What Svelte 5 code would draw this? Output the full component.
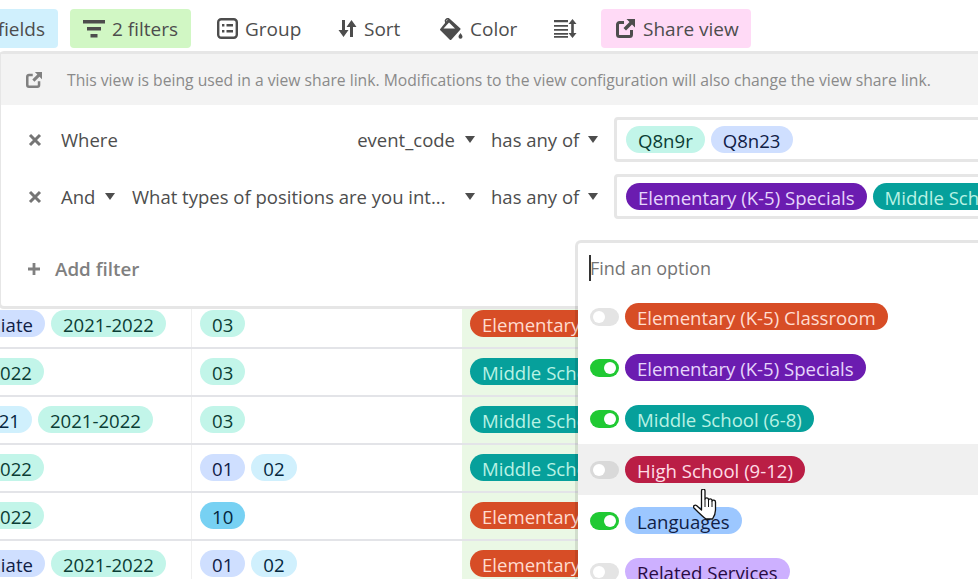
<script>
	const rows = [
		{ pad: 25, years: [['Affiliate', 'indigo'], ['2021-2022', 'mint']], codes: [['03', 'mint']], grade: 'el' },
		{ pad: 25, years: [['Affiliate', 'indigo'], ['2021-2022', 'mint']], codes: [['03', 'mint']], grade: 'el' },
		{ pad: 147, years: [['2021-2022', 'mint']], codes: [['03', 'mint']], grade: 'ms' },
		{ pad: 38, years: [['2020-2021', 'sky'], ['2021-2022', 'mint']], codes: [['01', 'indigo']], grade: 'ms' },
		{ pad: 147, years: [['2021-2022', 'mint']], codes: [['03', 'mint']], grade: 'el' },
		{ pad: 25, years: [['Affiliate', 'indigo'], ['2021-2022', 'mint']], codes: [['03', 'mint']], grade: 'el' },
		{ pad: 147, years: [['2021-2022', 'mint']], codes: [['03', 'mint']], grade: 'ms' },
		{ pad: 38, years: [['2020-2021', 'sky'], ['2021-2022', 'mint']], codes: [['03', 'mint']], grade: 'ms' },
		{ pad: 147, years: [['2021-2022', 'mint']], codes: [['01', 'indigo'], ['02', 'sky']], grade: 'ms' },
		{ pad: 147, years: [['2021-2022', 'mint']], codes: [['10', 'blue']], grade: 'el' },
		{ pad: 25, years: [['Affiliate', 'indigo'], ['2021-2022', 'mint']], codes: [['01', 'indigo'], ['02', 'sky']], grade: 'el' }
	];

	const options = [
		{ label: 'Elementary (K-5) Classroom', color: 'orange', on: false },
		{ label: 'Elementary (K-5) Specials', color: 'purple', on: true },
		{ label: 'Middle School (6-8)', color: 'teal', on: true },
		{ label: 'High School (9-12)', color: 'crimson', on: false, hover: true },
		{ label: 'Languages', color: 'lightblue', on: true },
		{ label: 'Related Services', color: 'lilac', on: false }
	];
</script>

<div class="page">
	<div class="toolbar">
		<button class="tool hide">Hide fields</button>
		<button class="tool filters">
			<svg width="22" height="18" viewBox="0 0 22 18"><path d="M0 0h22v3.4H0zM4 7h14v3.4H4zM7.500 14h7v3.400h-7z" fill="#4d4d4d" /></svg>
			2 filters
		</button>
		<button class="tool">
			<svg width="21" height="21" viewBox="0 0 21 21"><rect x="1.200" y="1.200" width="18.600" height="18.600" rx="3" fill="none" stroke="#4d4d4d" stroke-width="2.400" /><path d="M5 6h2.400v2.400H5zM5 12h2.400v2.400H5zM9.500 6H16v2.400H9.500zM9.500 12H16v2.400H9.500z" fill="#4d4d4d" /></svg>
			Group
		</button>
		<button class="tool">
			<svg width="19" height="19" viewBox="0 0 19 19"><path d="M4 1h3v10h3.500L5.500 18 .5 11H4zM12 18h3V8h3.500l-5-7-5 7H12z" fill="#4d4d4d" /></svg>
			Sort
		</button>
		<button class="tool">
			<svg width="23" height="22" viewBox="0 0 23 22"><path d="M9 1.500L19.500 11 10.500 21 1 11.500z" fill="#4d4d4d" stroke="#4d4d4d" stroke-width="2" stroke-linejoin="round" /><path d="M9 4.500L15 10.500H3.500z" fill="#fff" /><path d="M6 5.500L5.500 2.500Q6.500 0 9 1" fill="none" stroke="#4d4d4d" stroke-width="1.600" /><path d="M20.500 15c1.200 1.700 2 2.700 2 3.800a2 2 0 0 1-4 0c0-1.100.8-2.100 2-3.800z" fill="#4d4d4d" /></svg>
			Color
		</button>
		<button class="tool">
			<svg width="23" height="19" viewBox="0 0 23 19"><path d="M0 1h14v2.200H0zM0 6h14v1.800H0zM0 10h14v1.800H0zM0 14h14v1.800H0zM0 17h14v1.800H0z" fill="#4d4d4d" /><path d="M18.500 0l4 5h-2.700v9h2.700l-4 5-4-5h2.700V5h-2.700z" fill="#4d4d4d" /></svg>
		</button>
		<button class="tool share">
			<svg width="19" height="19" viewBox="0 0 19 19"><path d="M8 3.500H3.500A2 2 0 0 0 1.500 5.500v10a2 2 0 0 0 2 2h10a2 2 0 0 0 2-2V11" fill="none" stroke="#4d4d4d" stroke-width="3" /><path d="M10.500 0H19v8.500l-3-3-6 6-2.500-2.500 6-6z" fill="#4d4d4d" /></svg>
			Share view
		</button>
	</div>

	<div class="table">
		{#each rows as row}
			<div class="row">
				<div class="cell years" style="padding-right: {row.pad}px">
					{#each row.years as [text, tone]}
						<span class="pill {tone}">{text}</span>
					{/each}
				</div>
				<div class="cell codes">
					{#each row.codes as [text, tone]}
						<span class="pill {tone}">{text}</span>
					{/each}
				</div>
				<div class="cell grade">
					{#if row.grade === 'el'}
						<span class="pill orange">Elementary (K-5) Classroom</span>
					{:else}
						<span class="pill teal">Middle School (6-8)</span>
					{/if}
				</div>
			</div>
		{/each}
	</div>

	<div class="panel">
		<div class="notice">
			<svg width="16" height="16" viewBox="0 0 19 19"><path d="M8 3.500H3.500A2 2 0 0 0 1.500 5.500v10a2 2 0 0 0 2 2h10a2 2 0 0 0 2-2V11" fill="none" stroke="#808080" stroke-width="3" /><path d="M10.500 0H19v8.500l-3-3-6 6-2.500-2.500 6-6z" fill="#808080" /></svg>
			<span>This view is being used in a view share link. Modifications to the view configuration will also change the view share link.</span>
		</div>

		<div class="filter first">
			<svg class="x" width="14" height="14" viewBox="0 0 14 14"><path d="M2 2l10 10M12 2L2 12" stroke="#757575" stroke-width="3" /></svg>
			<span class="conj">Where</span>
			<span class="field end">event_code<i class="caret"></i></span>
			<span class="op">has any of<i class="caret"></i></span>
			<div class="values">
				<span class="pill mint">Q8n9r</span>
				<span class="pill indigo">Q8n23</span>
			</div>
		</div>

		<div class="filter">
			<svg class="x" width="14" height="14" viewBox="0 0 14 14"><path d="M2 2l10 10M12 2L2 12" stroke="#757575" stroke-width="3" /></svg>
			<span class="conj">And<i class="caret"></i></span>
			<span class="field">What types of positions are you int...<i class="caret"></i></span>
			<span class="op">has any of<i class="caret"></i></span>
			<div class="values">
				<span class="pill purple">Elementary (K-5) Specials</span>
				<span class="pill teal">Middle School (6-8)</span>
			</div>
		</div>

		<div class="add">
			<svg width="12" height="12" viewBox="0 0 12 12"><path d="M4.600 0h2.800v4.600H12v2.800H7.400V12H4.600V7.400H0V4.600h4.600z" fill="#808080" /></svg>
			Add filter
		</div>
	</div>

	<div class="menu">
		<div class="search"><i class="text-cursor"></i>Find an option</div>
		{#each options as opt}
			<div class="option" class:hover={opt.hover}>
				<span class="toggle" class:on={opt.on}><i></i></span>
				<span class="pill {opt.color}">{opt.label}</span>
			</div>
		{/each}
	</div>

	<svg class="hand" width="26" height="32" viewBox="0 0 26 32">
		<path d="M8.500 2c0-2.500 3.500-2.500 3.500 0V10c.5-1.500 3-1.500 3.500 0v1c.5-1.500 3-1.500 3.500 0v1c.5-1.500 3.500-1 3.500 1v8c0 4-1 6-3 9H13C10 28 5 23 1 19c-1.500-2 1-3.500 2.500-2.500L8.500 21z" fill="#fff" stroke="#111" stroke-width="1.300" stroke-linejoin="round" />
		<path d="M12 10v8M15.500 11v7M19 12v6" stroke="#111" stroke-width="1" />
	</svg>
</div>

<style>
	:global(body) {
		margin: 0;
	}

	.page {
		position: relative;
		width: 978px;
		height: 579px;
		overflow: hidden;
		background: #fff;
		font-family: "Open Sans", "Noto Sans", sans-serif;
		font-size: 17px;
		color: #4d4d4d;
	}

	.toolbar {
		display: grid;
		grid-template-columns: 132px 134px 121px 102px 114px 60px 160px;
		height: 39px;
		padding-top: 9px;
		margin-left: -62px;
		white-space: nowrap;
	}

	.tool {
		display: flex;
		align-items: center;
		justify-self: start;
		gap: 7px;
		height: 39px;
		padding: 0 13px;
		border: 0;
		border-radius: 4px;
		background: none;
		font: inherit;
		font-size: 19px;
		color: #4d4d4d;
	}

	.hide {
		justify-self: end;
		margin-right: 12px;
		background: #d0f0fd;
	}

	.filters {
		background: #d1f7c4;
	}

	.share {
		gap: 8px;
		padding: 0 12px 0 15px;
		background: #ffdaf6;
	}

	.table {
		position: absolute;
		top: 61px;
		left: 0;
		width: 978px;
	}

	.row {
		display: grid;
		grid-template-columns: 192px 270px 516px;
		height: 48px;
		box-sizing: border-box;
		border-bottom: 2px solid #e3e4e8;
	}

	.cell {
		display: flex;
		gap: 6px;
		padding-top: 9px;
		box-sizing: border-box;
		overflow: hidden;
		white-space: nowrap;
	}

	.years {
		justify-content: flex-end;
		border-right: 1px solid #efefef;
	}

	.codes {
		padding-left: 8px;
	}

	.grade {
		padding-left: 8px;
		background: #eaf8e5;
	}

	.pill {
		display: inline-block;
		flex: none;
		height: 27px;
		padding: 0 12px;
		border-radius: 14px;
		font-size: 18.600px;
		line-height: 29px;
		white-space: nowrap;
	}

	.mint {
		background: #c2f5e9;
		color: #0b3d35;
	}

	.indigo {
		background: #cfdfff;
		color: #102046;
	}

	.sky {
		background: #d0f0fd;
		color: #04283f;
	}

	.blue {
		background: #77d1f3;
		color: #04283f;
	}

	.orange {
		background: #d74d26;
		color: #ffdcd0;
	}

	.teal {
		background: #06a09b;
		color: #b8f2e4;
	}

	.purple {
		background: #6b1cb0;
		color: #e6d5fb;
	}

	.crimson {
		background: #ba1e45;
		color: #ffdce5;
	}

	.lightblue {
		background: #9cc7ff;
		color: #102046;
	}

	.lilac {
		background: #cdb0ff;
		color: #280b42;
	}

	.panel {
		position: absolute;
		top: 51px;
		left: -2px;
		width: 1100px;
		height: 258px;
		box-sizing: border-box;
		border: 3px solid #e6e6e6;
		border-radius: 6px;
		background: #fff;
	}

	.notice {
		display: flex;
		align-items: center;
		gap: 25px;
		height: 51px;
		padding-left: 25px;
		background: #f3f3f3;
		font-size: 15.700px;
		color: #8a8a8a;
		white-space: nowrap;
	}

	.filter {
		display: grid;
		grid-template-columns: 33px 71px 359px 123px auto;
		align-items: center;
		height: 57px;
		padding-left: 27px;
		white-space: nowrap;
	}

	.filter.first {
		margin-top: 6px;
	}

	.x {
		display: block;
	}

	.conj,
	.field,
	.op {
		display: flex;
		align-items: center;
		font-size: 18.500px;
	}

	.conj i {
		margin-left: 10px;
	}

	.field {
		justify-content: space-between;
		padding-right: 16px;
	}

	.field.end {
		justify-content: flex-end;
	}

	.field.end i {
		margin-left: 10px;
	}

	.op i {
		margin-left: 9px;
	}

	.caret {
		display: inline-block;
		width: 0;
		height: 0;
		border-left: 5.500px solid transparent;
		border-right: 5.500px solid transparent;
		border-top: 7px solid #4d4d4d;
	}

	.values {
		display: flex;
		gap: 6px;
		box-sizing: border-box;
		width: 400px;
		height: 45px;
		padding: 6px 9px;
		border: 3px solid #e6e6e6;
		border-radius: 4px;
		overflow: hidden;
	}

	.add {
		display: flex;
		align-items: center;
		gap: 15px;
		margin-top: 22px;
		padding-left: 27px;
		height: 44px;
		font-size: 18.800px;
		font-weight: 600;
		color: #808080;
	}

	.menu {
		position: absolute;
		top: 240px;
		left: 575px;
		width: 420px;
		height: 360px;
		box-sizing: border-box;
		border: 3px solid rgba(0, 0, 0, 0.1);
		border-radius: 6px;
		background: #fff;
		background-clip: padding-box;
	}

	.search {
		position: relative;
		height: 48px;
		padding-left: 12px;
		font-size: 18px;
		line-height: 50px;
		color: #757575;
	}

	.text-cursor {
		position: absolute;
		left: 11px;
		top: 12px;
		width: 2px;
		height: 26px;
		background: #333;
	}

	.option {
		display: flex;
		align-items: center;
		gap: 6px;
		height: 51px;
		padding-left: 12px;
	}

	.option.hover {
		background: #f0f0f0;
	}

	.toggle {
		display: flex;
		box-sizing: border-box;
		width: 29px;
		height: 18px;
		padding: 3px;
		border-radius: 9px;
		background: #e4e4e4;
	}

	.hover .toggle {
		background: #d9d9d9;
	}

	.toggle.on {
		justify-content: flex-end;
		background: #20c933;
	}

	.toggle i {
		width: 12px;
		height: 12px;
		border-radius: 50%;
		background: #fff;
	}

	.hand {
		position: absolute;
		left: 693px;
		top: 489px;
	}
</style>
